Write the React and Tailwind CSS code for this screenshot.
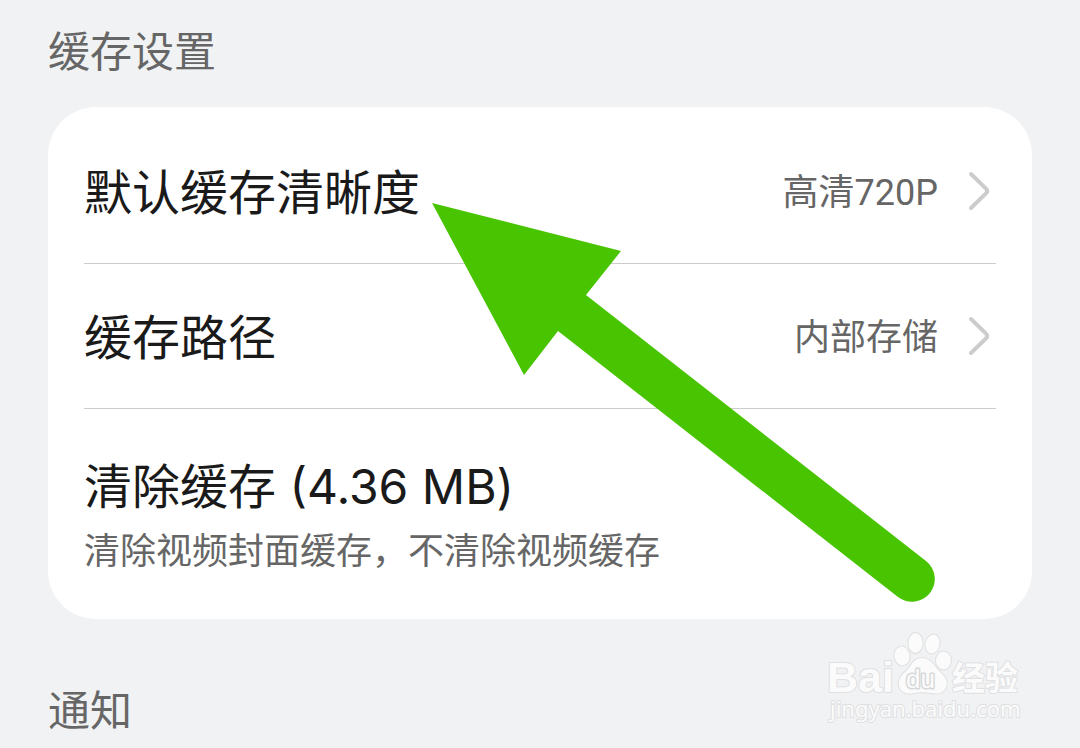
import clsx from 'clsx'

const SETTINGS = [
  { id: 'quality', label: '默认缓存清晰度', value: '高清720P' },
  { id: 'path', label: '缓存路径', value: '内部存储' },
]

function Chevron() {
  return (
    <svg className="h-10 w-6 shrink-0" viewBox="0 0 24 40" fill="none" aria-hidden="true">
      <path
        d="M3 3 L18 17.6 Q20.4 20 18 22.4 L3 37"
        stroke="#cccccc"
        strokeWidth="4"
        strokeLinecap="round"
        strokeLinejoin="round"
      />
    </svg>
  )
}

function SettingRow({ label, value }) {
  return (
    <button type="button" className="flex h-[145px] w-full items-center justify-between text-left">
      <span className="pt-1 text-[48px] leading-[64px] text-[#1a1a1a]">{label}</span>
      <span className="flex items-center gap-[30px] pr-1">
        <span className="pt-1 font-['Roboto','Noto_Sans_CJK_SC',sans-serif] text-[36px] leading-[48px] text-[#666666]">
          {value}
        </span>
        <Chevron />
      </span>
    </button>
  )
}

function SectionTitle({ children, className }) {
  return <h2 className={clsx('text-[42px] leading-[56px] text-[#666666]', className)}>{children}</h2>
}

function Pointer() {
  return (
    <svg
      className="pointer-events-none absolute top-24 left-96 h-[400px] w-[504px]"
      viewBox="0 0 504 400"
      aria-hidden="true"
    >
      <path
        d="M0 0 L189 48 L154 92 L494 358 A22.8 22.8 0 0 1 466 394 L126 128 L92 172 Z"
        fill="#48c400"
      />
    </svg>
  )
}

function Watermark() {
  return (
    <svg
      className="pointer-events-none absolute right-[54px] bottom-4 h-[106px] w-[200px]"
      viewBox="0 0 200 106"
      fill="#fbfbfb"
      stroke="#dfe0e1"
      strokeWidth="2"
      strokeLinejoin="round"
      paintOrder="stroke"
      role="img"
      aria-label="Baidu 经验"
    >
      <text
        x="1"
        y="66"
        fontSize="43"
        fontFamily="'Liberation Sans', Arial, sans-serif"
        fontWeight="700"
      >
        Bai
      </text>
      <ellipse cx="76" cy="30" rx="7.5" ry="9.5" transform="rotate(-10 76 30)" />
      <ellipse cx="89.5" cy="17" rx="7" ry="10" />
      <ellipse cx="106.5" cy="18" rx="7" ry="9.5" transform="rotate(14 106.5 18)" />
      <ellipse cx="117.5" cy="34.5" rx="7.5" ry="9" />
      <path d="M96 32 C105 32 108 40 114 46 C120 51 122 56 120 61 C118 68 111 68 104 67 C98 66 94 66 88 67 C80 69 74 66 73 59 C72 52 77 48 82 43 C86 38 88 32 96 32 Z" />
      <text
        x="80"
        y="62"
        fontSize="26"
        fontFamily="'Liberation Sans', Arial, sans-serif"
        stroke="#d6d7d8"
        strokeWidth="3"
      >
        du
      </text>
      <text
        x="126"
        y="64"
        fontSize="33"
        fontFamily="'Noto Sans CJK SC', sans-serif"
        fontWeight="700"
      >
        经验
      </text>
      <text x="4" y="91" fontSize="22" fontFamily="'Noto Sans', sans-serif">
        jingyan.baidu.com
      </text>
    </svg>
  )
}

export default function App() {
  return (
    <main className="relative min-h-screen bg-[#f1f2f4] px-12 pt-6 pb-2 font-['Inter','Noto_Sans_CJK_SC',sans-serif]">
      <SectionTitle>缓存设置</SectionTitle>

      <section className="relative mt-[27px] rounded-[48px] bg-white px-9 py-3">
        <div className="divide-y divide-[#cccccc]">
          {SETTINGS.map((item) => (
            <SettingRow key={item.id} label={item.label} value={item.value} />
          ))}
          <button type="button" className="block w-full pt-[46px] pb-8 text-left">
            <span className="block text-[48px] leading-[64px] text-[#1a1a1a]">清除缓存 (4.36 MB)</span>
            <span className="mt-2 block text-[36px] leading-[48px] text-[#666666]">
              清除视频封面缓存，不清除视频缓存
            </span>
          </button>
        </div>
        <Pointer />
      </section>

      <SectionTitle className="mt-16">通知</SectionTitle>

      <Watermark />
    </main>
  )
}
